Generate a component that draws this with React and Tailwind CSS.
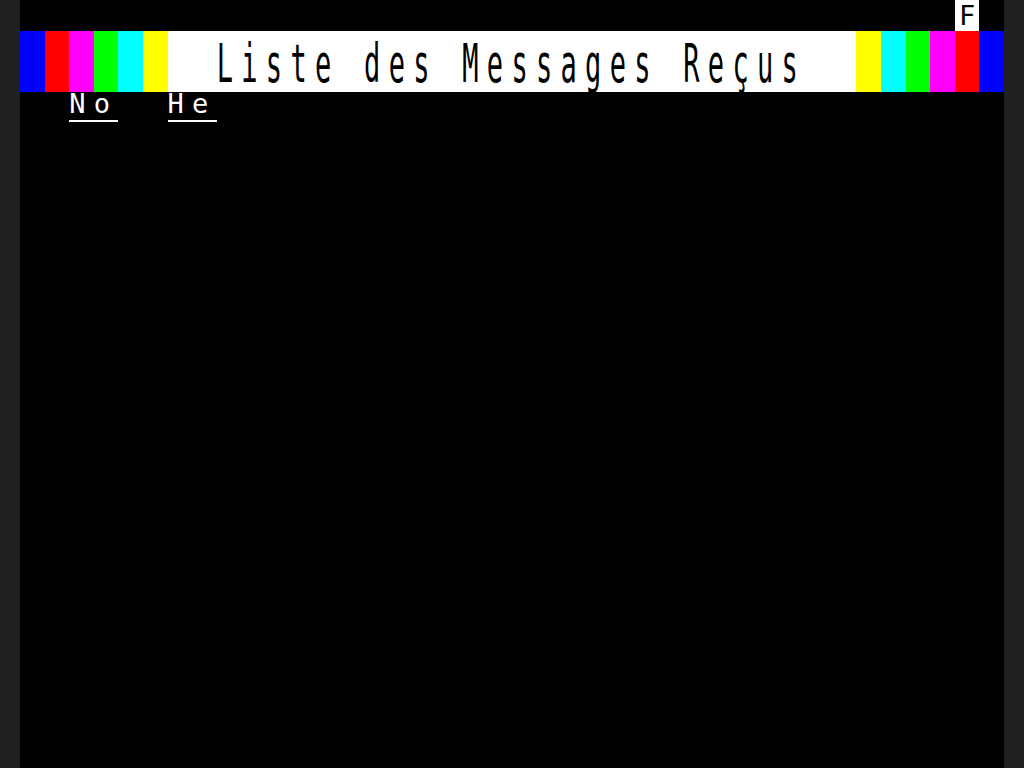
const left = ["bg-[#0000ff]", "bg-[#ff0000]", "bg-[#ff00ff]", "bg-[#00ff00]", "bg-[#00ffff]", "bg-[#ffff00]"];
const right = ["bg-[#ffff00]", "bg-[#00ffff]", "bg-[#00ff00]", "bg-[#ff00ff]", "bg-[#ff0000]", "bg-[#0000ff]"];

function Heading({ label }) {
  return (
    <div className="w-[49.2px] h-[29px] border-b-2 border-white flex items-end">
      <span className="leading-none pb-[3px]">{label}</span>
    </div>
  );
}

export default function App() {
  return (
    <div className="w-[1024px] h-[768px] bg-[#202020] px-[20px] overflow-hidden">
      <div
        className="h-full bg-black text-white text-[27px] tracking-[8.3px]"
        style={{ fontFamily: '"DejaVu Sans Mono", monospace' }}
      >
        {/* row 0: status */}
        <div className="h-[31px] flex justify-end">
          <div className="w-[24.6px] h-full bg-white text-black flex items-center justify-center leading-[31px] tracking-normal">
            F
          </div>
          <div className="w-[24.6px]" />
        </div>

        {/* rows 1-2: double height title band */}
        <div className="h-[61px] flex">
          {left.map((c, i) => (
            <div key={"l" + i} className={"w-[24.6px] h-full " + c} />
          ))}
          <div className="flex-1 bg-white text-black pl-[49.2px] flex items-center">
            <span className="inline-block leading-none scale-y-[2] translate-y-[1px] whitespace-pre">
              Liste des Messages Reçus
            </span>
          </div>
          {right.map((c, i) => (
            <div key={"r" + i} className={"w-[24.6px] h-full " + c} />
          ))}
        </div>

        {/* row 3: column headings */}
        <div className="flex pl-[49.2px] gap-[49.2px] pt-[1px]">
          <Heading label="No" />
          <Heading label="He" />
        </div>
      </div>
    </div>
  );
}
